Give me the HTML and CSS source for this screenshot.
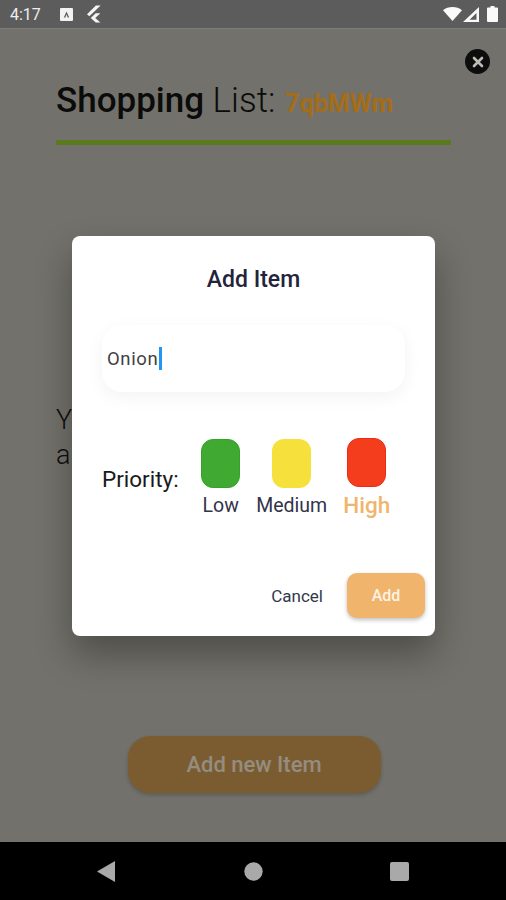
FILE: index.html
```html
<!DOCTYPE html>
<html lang="en">
<head>
    <meta charset="UTF-8">
    <meta name="viewport" content="width=device-width, initial-scale=1.0">
    <title>Shopping List</title>
    <link rel="stylesheet" href="styles.css">
</head>
<body>
    <div class="phone">
        <!-- Status bar -->
        <div class="status-bar">
            <div class="status-left">
                <span class="clock">4:17</span>
                <svg class="icon-a" width="13" height="13" viewBox="0 0 13 13"><path fill="#f2f2f2" fill-rule="evenodd" d="M1 0h11a1 1 0 0 1 1 1v11a1 1 0 0 1-1 1H1a1 1 0 0 1-1-1V1a1 1 0 0 1 1-1zM6.5 3.5L3.8 9.5h1.5l1.2-2.9 1.2 2.9h1.5z"/></svg>
                <svg class="icon-flutter" width="15" height="18" viewBox="0 0 16 18"><path fill="#f4f4f4" d="M9.5 0h5L4.8 9.200l-2.400 2.300L0 9.200zM9.300 8.300h5L8.800 13.300l5.500 4.700h-5L4 13.200z"/></svg>
            </div>
            <div class="status-right">
                <svg class="icon-wifi" width="19" height="14" viewBox="0 0 19 14"><path fill="#fafafa" d="M0 3.200C2.600 1.100 5.900 0 9.500 0s6.900 1.100 9.500 3.200L9.500 14z"/></svg>
                <svg class="icon-signal" width="16" height="15" viewBox="0 0 16 15"><path fill="#fafafa" fill-rule="evenodd" d="M16 0v15H0zM13.500 6L6.500 12.800h7z"/></svg>
                <svg class="icon-battery" width="11" height="16" viewBox="0 0 11 16"><path fill="#fafafa" d="M3.500 0h4v1.500H10a1 1 0 0 1 1 1V15a1 1 0 0 1-1 1H1a1 1 0 0 1-1-1V2.500a1 1 0 0 1 1-1h2.500z"/></svg>
            </div>
        </div>

        <!-- List screen, dimmed behind the dialog -->
        <div class="screen">
            <div class="close-row">
                <span class="close-btn">
                    <svg width="12" height="12" viewBox="0 0 12 12"><path stroke="#bdbdb8" stroke-width="2.600" stroke-linecap="round" d="M2 2l8 8M10 2l-8 8"/></svg>
                </span>
            </div>
            <div class="list-title">
                <b>Shopping</b> List:<span class="list-code">7qbMWm</span>
            </div>
            <div class="title-rule"></div>
            <p class="empty-text">Y<br>a</p>
            <button class="add-new">Add new Item</button>
        </div>

        <!-- Android navigation -->
        <div class="nav-bar">
            <svg width="19" height="21" viewBox="0 0 19 21"><path fill="#a9a9a9" d="M18 0v21L0 10.500z"/></svg>
            <svg width="19" height="19" viewBox="0 0 19 19"><circle cx="9.500" cy="9.500" r="9.200" fill="#a9a9a9"/></svg>
            <svg width="19" height="19" viewBox="0 0 19 19"><rect width="19" height="19" rx="2" fill="#a9a9a9"/></svg>
        </div>

        <!-- Add item dialog -->
        <div class="dialog">
            <h2 class="dialog-title">Add Item</h2>
            <div class="item-input">Onion<span class="caret"></span></div>
            <div class="priority">
                <span class="priority-label">Priority:</span>
                <div class="priority-options">
                    <div class="option option-low">
                        <span class="swatch swatch-low"></span>
                        <span class="option-name">Low</span>
                    </div>
                    <div class="option option-medium">
                        <span class="swatch swatch-medium"></span>
                        <span class="option-name">Medium</span>
                    </div>
                    <div class="option option-high">
                        <span class="swatch swatch-high"></span>
                        <span class="option-name selected">High</span>
                    </div>
                </div>
            </div>
            <div class="dialog-actions">
                <button class="cancel-btn">Cancel</button>
                <button class="add-btn">Add</button>
            </div>
        </div>
    </div>
</body>
</html>
```

FILE: styles.css
```css
* {
    box-sizing: border-box;
}

body {
    margin: 0;
    background-color: #72716b;
    font-family: Roboto, "Liberation Sans", sans-serif;
}

button {
    font-family: inherit;
    border: none;
}

.phone {
    position: relative;
    width: 506px;
    height: 900px;
    display: flex;
    flex-direction: column;
    overflow: hidden;
}

.status-bar {
    height: 29px;
    flex-shrink: 0;
    display: flex;
    justify-content: space-between;
    align-items: center;
    padding: 0 8px 0 10px;
    background-color: #5c5c5c;
    border-bottom: 1px solid #7b7b77;
}

.status-left,
.status-right {
    display: flex;
    align-items: center;
}

.clock {
    font-size: 16px;
    color: #eeeeee;
    width: 50px;
}

.icon-flutter {
    margin-left: 14px;
}

.icon-signal {
    margin-left: 1px;
}

.icon-battery {
    margin-left: 8px;
}

.screen {
    flex: 1;
    display: flex;
    flex-direction: column;
    background-color: #72716b;
    padding: 0 55px 0 56px;
}

.close-row {
    display: flex;
    justify-content: flex-end;
    margin: 20px -39px 0 0;
}

.close-btn {
    width: 25px;
    height: 25px;
    border-radius: 50%;
    background-color: #0d0d0d;
    display: flex;
    justify-content: center;
    align-items: center;
}

.list-title {
    margin-top: 5px;
    height: 43px;
    font-size: 35px;
    line-height: 43px;
    font-weight: 300;
    color: #0b0b0a;
    white-space: nowrap;
}

.list-title b {
    font-weight: 500;
}

.list-code {
    margin-left: 10px;
    font-size: 25px;
    font-weight: 700;
    color: #a56d18;
}

.title-rule {
    height: 5px;
    margin-top: 18px;
    background-color: #5a7a1e;
}

.empty-text {
    margin: 258px 0 0;
    font-size: 27px;
    line-height: 35px;
    font-weight: 300;
    color: #0f0f0e;
}

.add-new {
    align-self: center;
    width: 253px;
    height: 57px;
    margin: 263px 0 0 1px;
    border-radius: 22px;
    background-color: #7b5c30;
    color: #948d80;
    font-size: 22px;
    font-weight: 500;
    box-shadow: 0 2px 4px rgba(0, 0, 0, 0.2);
}

.nav-bar {
    height: 58px;
    flex-shrink: 0;
    display: flex;
    align-items: center;
    padding: 0 97px;
    justify-content: space-between;
    background-color: #000000;
}

.dialog {
    position: absolute;
    left: 72px;
    top: 236px;
    width: 363px;
    height: 400px;
    display: flex;
    flex-direction: column;
    padding: 0 10px 0 30px;
    border-radius: 8px;
    background-color: #ffffff;
    box-shadow: 0 18px 36px rgba(0, 0, 0, 0.32);
}

.dialog-title {
    margin: 30px 20px 0 0;
    text-align: center;
    font-size: 23px;
    line-height: 28px;
    font-weight: 500;
    color: #23233b;
}

.item-input {
    width: 303px;
    height: 67px;
    margin-top: 31px;
    padding-left: 5px;
    display: flex;
    align-items: center;
    border-radius: 20px;
    background-color: #ffffff;
    box-shadow: 0 5px 18px rgba(0, 0, 0, 0.05);
    font-size: 18.500px;
    letter-spacing: 0.6px;
    color: #3f3f3f;
}

.caret {
    width: 2.500px;
    height: 23px;
    margin-left: 1px;
    background-color: #2196f3;
}

.priority {
    display: flex;
    align-items: flex-start;
    margin-top: 47px;
}

.priority-label {
    margin-top: 26px;
    font-size: 22.500px;
    line-height: 28px;
    color: #1a1a1a;
}

.priority-options {
    display: flex;
    margin-left: 22px;
}

.option {
    display: flex;
    flex-direction: column;
    align-items: center;
    width: 40px;
}

.option-medium {
    margin-left: 31px;
}

.option-high {
    margin-left: 35px;
    margin-top: -1px;
}

.swatch {
    width: 39px;
    height: 49px;
    flex-shrink: 0;
    border-radius: 12px;
}

.swatch-low {
    background-color: #3fa931;
    border: 1px solid #35a32b;
}

.swatch-medium {
    background-color: #f6e13c;
}

.swatch-high {
    background-color: #f43d1c;
    border: 1px solid #ee2a12;
}

.option-name {
    margin-top: 6px;
    font-size: 19.500px;
    line-height: 24px;
    color: #33334a;
    white-space: nowrap;
}

.option-name.selected {
    font-size: 22.500px;
    font-weight: 500;
    color: #efb56c;
}

.dialog-actions {
    display: flex;
    justify-content: flex-end;
    align-items: center;
    gap: 24px;
    margin-top: 55px;
}

.cancel-btn {
    padding: 0;
    background: none;
    font-size: 17px;
    font-weight: 400;
    color: #33384a;
}

.add-btn {
    width: 78px;
    height: 45px;
    border-radius: 10px;
    background-color: #f0b46c;
    color: #fdf3e4;
    font-size: 16px;
    font-weight: 500;
    box-shadow: 0 2px 4px rgba(0, 0, 0, 0.25);
}
```
